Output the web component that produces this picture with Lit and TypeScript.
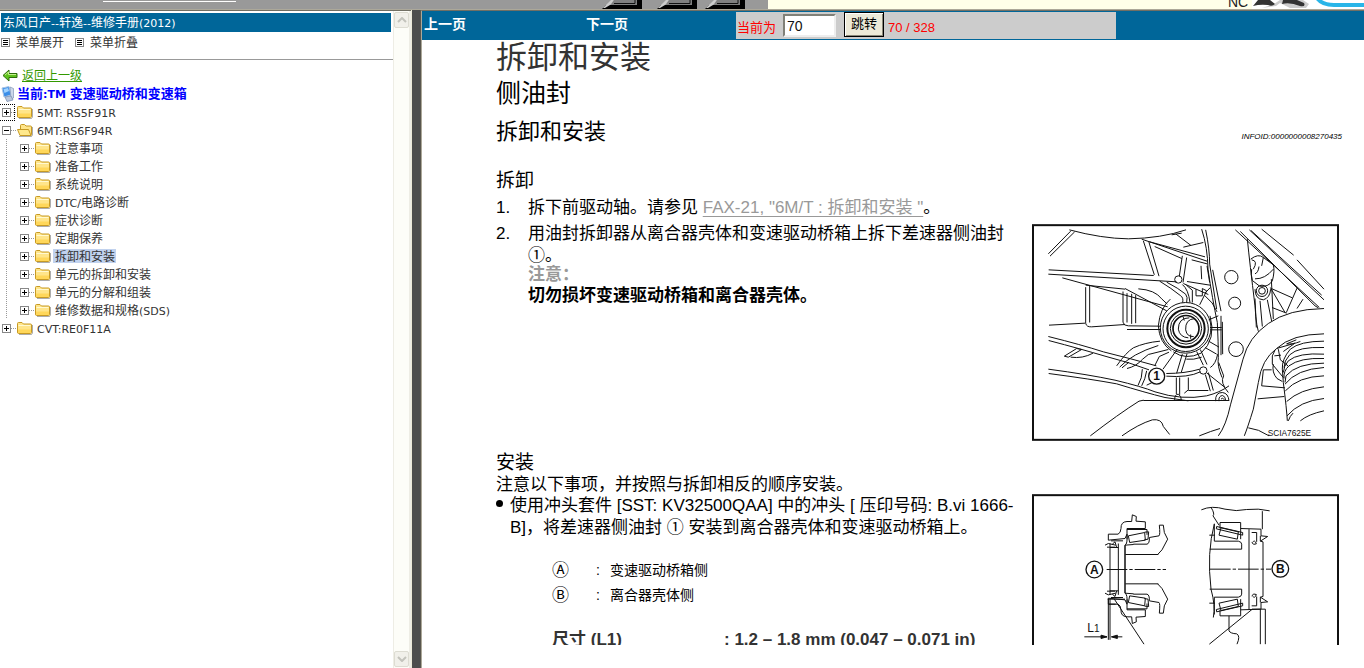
import { LitElement, html, svg, css, nothing } from "lit";
import { customElement, property, state } from "lit/decorators.js";
import { classMap } from "lit/directives/class-map.js";

interface TreeNode {
  label: string;
  note?: string;
  latin?: boolean;
  open?: boolean;
  focused?: boolean;
  selected?: boolean;
  children?: TreeNode[];
}

const TREE: TreeNode[] = [
  { label: "5MT: RS5F91R", latin: true, focused: true },
  {
    label: "6MT:RS6F94R",
    latin: true,
    open: true,
    children: [
      { label: "注意事项" },
      { label: "准备工作" },
      { label: "系统说明" },
      { label: "DTC/", note: "电路诊断", latin: true },
      { label: "症状诊断" },
      { label: "定期保养" },
      { label: "拆卸和安装", selected: true },
      { label: "单元的拆卸和安装" },
      { label: "单元的分解和组装" },
      { label: "维修数据和规格", note: "(SDS)" },
    ],
  },
  { label: "CVT:RE0F11A", latin: true },
];

const folder = (open: boolean) => html`
  <svg class="folder" width="16" height="14" viewBox="0 0 16 14" aria-hidden="true">
    <path d="M2 13.500H14.500L15.500 12V4" fill="none" stroke="#777" opacity=".6" />
    ${open
      ? svg`<path d="M3.500 10V2.500Q3.500 1.500 4.500 1.500H7.500L9 3H13.500Q14.500 3 14.500 4V11.500Q14.500 12.500 13.500 12.500H4.500Z" fill="#ffe58a" stroke="#c79a24"/>
        <path d="M0.500 6.500H11.500L14 12.500H3Z" fill="#ffe98c" stroke="#c79a24"/>`
      : svg`<path d="M0.500 11V2.500Q0.500 1.500 1.500 1.500H5L6.500 3H13.500Q14.500 3 14.500 4V11.500Q14.500 12.500 13.500 12.500H1.500Q0.500 12.500 0.500 11Z" fill="#ffe58a" stroke="#c79a24"/>
        <path d="M1.500 4.500H13.500" stroke="#fff9d0"/><path d="M1 8.500H14V12H1Z" fill="#ffd75a"/>`}
  </svg>`;

@customElement("page-banner")
class PageBanner extends LitElement {
  static styles = css`
    :host { display: flex; height: 9px; flex: none; overflow: hidden; background: #ffffe9; }
    .tools { width: 768px; height: 9px; background: #999; flex: none; }
    .name {
      margin-left: auto; width: 24px; margin-top: -5px;
      font: 14px/14px "Liberation Sans", sans-serif; color: #222;
    }
    .art { width: 112px; height: 9px; flex: none; }
  `;
  render() {
    return html`
      <svg class="tools" viewBox="0 0 768 9" aria-hidden="true">
        <path d="M103 1.500H236" stroke="#fff" />
        ${[602, 657, 705].map(
          (x) => svg`<g transform="translate(${x} 0)">
            <path d="M0 9L4 5H35V0H40V9Z" fill="#000"/>
            <path d="M1 8L9 0H12L8 5L3 8Z" fill="#ccc"/>
            <path d="M9 5L12 0H35V5Z" fill="#808080"/>
            <path d="M12 3.500H33V0" stroke="#111" fill="none"/>
          </g>`
        )}
      </svg>
      <span class="name">NC</span>
      <svg class="art" viewBox="1252 0 112 9" aria-hidden="true">
        <rect x="1252" width="112" height="9" fill="#fff" />
        <path d="M1262 8L1276 6L1280 3L1290 8H1306L1309 4L1303 0H1280L1274 4Z" fill="#ccc" />
        <path d="M1258 0H1270L1275 4Q1272 7 1268 5Q1260 4 1253 6ZM1283 0H1297L1304 3Q1306 7 1300 6Q1290 2 1282 4Z" fill="#333" />
        <path d="M1317 -2Q1322 5 1334 5H1364" fill="none" stroke="#29b5e8" stroke-width="4" />
      </svg>`;
  }
}

@customElement("manual-tree")
class ManualTree extends LitElement {
  static styles = css`
    :host {
      display: flex; flex: none; width: 411px; overflow: hidden; background: #fff;
      color: #333; font: 12px/18px "Noto Sans CJK SC", sans-serif;
    }
    .pane { flex: 1; min-width: 0; }
    .title { margin: 2px 2px 0 1px; padding-left: 2px; background: #069; color: #fff; height: 19px; }
    .latin { font: 11px/18px "DejaVu Sans", Verdana, sans-serif; }
    .tools { display: flex; gap: 9px; height: 27px; align-items: flex-start; border-bottom: 1px solid #999; }
    .tool {
      display: flex; align-items: center; gap: 6px; padding: 0 1px; border: 0;
      background: none; font: inherit; color: inherit; height: 20px;
    }
    .line { display: flex; align-items: center; gap: 4px; height: 18px; padding-left: 2px; }
    .back { margin-top: 6px; }
    .back a { color: #390; }
    .current { height: 19px; gap: 2px; padding-left: 1px; }
    .current a { color: #00f; font-weight: bold; text-decoration: none; font-size: 13px; }
    ul { list-style: none; margin: 0; padding: 0; }
    ul ul {
      padding-left: 18px;
      background: repeating-linear-gradient(#999 0 1px, transparent 1px 2px) 6px 0 / 1px 100% no-repeat;
    }
    .row { display: flex; align-items: center; height: 18px; padding-left: 2px; }
    .toggle { border: 0; padding: 0; background: none; width: 9px; height: 9px; display: block; }
    .toggle svg { display: block; }
    .focused { outline: 1px dotted #000; outline-offset: 3px; }
    .dots { width: 6px; height: 1px; background: repeating-linear-gradient(90deg, #999 0 1px, transparent 1px 2px); }
    .label { color: inherit; text-decoration: none; margin-left: 2px; padding: 0 1px 0 2px; height: 14px; line-height: 14px; white-space: nowrap; }
    .label .latin { line-height: 14px; }
    .selected { background: #c1d2ee; }
    .scroll {
      flex: none; width: 15px; display: flex; flex-direction: column; justify-content: space-between;
      background: #fdfdf8; border-left: 1px solid #eeede5; border-right: 2px solid #eeede5; padding: 1px 0;
    }
    .arrow { width: 15px; height: 16px; padding: 0; border: 1px solid #dddcd2; border-radius: 2px; background: #f1f0ea; display: grid; place-items: center; }
  `;

  @state() private closed = new Set<TreeNode>();

  private toggle(node: TreeNode) {
    const next = new Set(this.closed);
    next.has(node) ? next.delete(node) : next.add(node);
    this.closed = next;
  }

  private node(n: TreeNode): unknown {
    const open = !!n.open && !this.closed.has(n);
    const note = n.note ? html`<span class=${classMap({ latin: !n.latin })}>${n.note}</span>` : nothing;
    return html`<li>
      <div class="row">
        <button class=${classMap({ toggle: true, focused: !!n.focused })} aria-label=${open ? "收起" : "展开"} @click=${() => this.toggle(n)}>
          <svg width="9" height="9" viewBox="0 0 9 9">
            <rect x=".5" y=".5" width="8" height="8" fill="#fff" stroke="#888" />
            <path d=${open ? "M2 4.5H7" : "M2 4.5H7M4.5 2V7"} stroke="#000" />
          </svg>
        </button>
        <span class="dots"></span>
        ${folder(open)}
        <a href="#" class=${classMap({ label: true, selected: !!n.selected })}
          ><span class=${classMap({ latin: !!n.latin })}>${n.label}</span>${note}</a>
      </div>
      ${open && n.children ? html`<ul>${n.children.map((c) => this.node(c))}</ul>` : nothing}
    </li>`;
  }

  render() {
    const menuIcon = html`<svg width="9" height="9" viewBox="0 0 9 9" aria-hidden="true">
      <rect x=".5" y=".5" width="8" height="8" fill="#fff" stroke="#888" />
      <path d="M2 2.500H7M2 4.500H7M2 6.500H7" stroke="#000" />
    </svg>`;
    return html`
      <div class="pane">
        <div class="title">东风日产<span class="latin">--</span>轩逸<span class="latin">--</span>维修手册<span class="latin">(2012)</span></div>
        <div class="tools">
          <button class="tool">${menuIcon}菜单展开</button>
          <button class="tool">${menuIcon}菜单折叠</button>
        </div>
        <div class="line back">
          <svg width="16" height="13" viewBox="0 0 16 13" aria-hidden="true">
            <path d="M1 6.500L7 1V4.500H15V8.500H7V12Z" fill="#5fc21e" stroke="#2d6b0c" />
            <path d="M3 6L6.500 3V5.500H14" fill="none" stroke="#c4f08c" />
          </svg>
          <a href="#">返回上一级</a>
        </div>
        <div class="line current">
          <svg width="14" height="16" viewBox="0 0 14 16" aria-hidden="true">
            <path d="M1 2L8 0.500L10 9L3 11Z" fill="#3b8ee8" stroke="#a9c4e4" />
            <path d="M2.500 3L7 2L8 5L3.500 7Z" fill="#9fd2ff" />
            <path d="M9 1L12.500 2.500V12L10 13Z" fill="#cdd8ea" stroke="#8296b8" stroke-width=".7" />
            <path d="M4 11L10 10L12 14L6 15.500Z" fill="#bcc8dc" stroke="#7488aa" stroke-width=".7" />
          </svg>
          <a href="#">当前<span class="latin"><b>:TM </b></span>变速驱动桥和变速箱</a>
        </div>
        <ul>${TREE.map((n) => this.node(n))}</ul>
      </div>
      <div class="scroll">
        ${["M1 5L5 1L9 5", "M1 1L5 5L9 1"].map(
          (d, i) => html`<button class="arrow" aria-label=${i ? "向下" : "向上"}>
            <svg width="10" height="6" viewBox="0 0 10 6"><path d=${d} fill="none" stroke="#c3c3bc" stroke-width="2" /></svg>
          </button>`
        )}
      </div>`;
  }
}

@customElement("page-nav")
class PageNav extends LitElement {
  static styles = css`
    :host {
      display: grid; grid-template-columns: 164fr 150fr 380fr 248fr; flex: none; height: 29px;
      background: #069; align-items: center; font-family: "Liberation Sans", "Noto Sans CJK SC", sans-serif;
    }
    .go { color: #fff; font-weight: bold; font-size: 14px; line-height: 20px; text-decoration: none; padding: 0 0 3px 2px; }
    .next { padding-left: 0; }
    form { display: flex; height: 27px; background: #ccc; color: #f00; font-size: 13px; line-height: 16px; padding-left: 1px; }
    label, output { margin-top: 8px; }
    input {
      width: 53px; height: 23px; margin: 2px 0 0 7px; padding: 0 2px; box-sizing: border-box; background: #fff;
      border: 2px solid; border-color: #808078 #eee #eee #808078; font: 14px "Liberation Sans", sans-serif; color: #111;
    }
    button {
      width: 40px; height: 25px; margin: 0 4px 0 8px; padding: 0 0 4px; background: #ece9d8; color: #000;
      border: 1px solid #000; box-shadow: inset 1px 1px #fff, inset -1px -1px #8a887a; font: 13px "Noto Sans CJK SC", sans-serif;
    }
  `;
  @property({ type: Number }) page = 70;
  @property({ type: Number }) total = 328;
  render() {
    return html`
      <a class="go" href="#">上一页</a>
      <a class="go next" href="#">下一页</a>
      <form @submit=${(e: Event) => e.preventDefault()}>
        <label for="page">当前为</label>
        <input id="page" type="text" .value=${String(this.page)} />
        <button>跳转</button>
        <output>${this.page} / ${this.total}</output>
      </form>`;
  }
}

const housingFigure = html`
  <svg class="figure" viewBox="21 15 921 650" role="img" aria-label="差速器侧油封">
    <rect x="24" y="18" width="915" height="644" fill="#fff" stroke="#111" stroke-width="6" />
    <g fill="none" stroke="#111" stroke-width="3">
      <path d="M70 104L137 36M75 111L149 38M133 32Q230 58 310 59Q410 57 483 32M71 152L386 169M70 165L455 188M355 65L388 167M371 66L402 171M350 60L546 126M374 68L540 113M389 82L470 118M452 44L498 79M440 47L470 42M475 84L535 70M472 110L463 171M485 115L474 190M500 122L546 134" />
      <circle cx="460" cy="181" r="11" />
      <path d="M112 176L428 263M300 208L425 275M182 204V312Q184 324 200 323L300 316M194 198V310M182 198L300 210M294 217V309Q296 320 310 320L405 321M306 222V310M320 224V314M332 228V312M306 331H405M72 318L180 312" />
      <path d="M404 186Q440 208 466 229Q476 235 473 250M425 189Q460 207 482 225Q489 234 485 249M472 196Q490 210 495 250M484 198L502 213V250M475 193L550 226M486 187L555 198M340 209Q390 212 410 239L427 255M513 210V230L532 230V208L545 215L524 257M538 228Q566 250 576 278M556 205L540 222" />
      <path d="M436 240Q405 266 400 320Q403 370 439 395M445 398Q482 424 528 402Q575 360 555 290M551 302L580 290M555 325H590M555 332H590M551 366L582 384M540 385L575 405" />
      <circle cx="482" cy="326" r="76" />
      <circle cx="482" cy="329" r="68" />
      <circle cx="483" cy="328" r="56" stroke-width="6" />
      <circle cx="483" cy="328" r="47" />
      <circle cx="483" cy="328" r="39" stroke-width="5" />
      <path d="M510 298Q480 300 482 332Q486 354 506 352M493 296Q460 296 460 330Q464 354 490 356M474 292L478 304M497 346V359" />
      <path d="M70 352Q170 377 235 398Q320 419 394 440M71 364Q170 390 240 411Q315 430 372 452M70 450Q190 466 270 483Q350 502 390 518Q470 544 545 530Q585 520 612 500M71 463Q200 480 275 494Q360 520 420 535L490 545" />
      <path d="M118 411L155 388L170 391L130 414ZM137 414Q173 419 204 402M275 440Q303 400 325 386Q360 370 405 366M284 444Q320 404 400 379M291 446L312 429M306 448Q333 442 353 420L370 406L430 391M389 440L403 412L432 399M352 450Q352 477 339 499M365 455Q361 480 350 500M365 498L394 484" />
      <path d="M457 390L414 450M472 405L455 462M486 404L469 459M515 397L535 438M526 391L546 436M424 463Q480 463 524 450M424 471Q490 476 526 458M454 475V525M464 475V527M490 475V512L478 522M490 514L550 514M541 466L556 516M550 460L565 514M546 462L600 505M556 445Q572 435 578 405M530 414Q505 423 484 420" />
      <circle cx="535" cy="454" r="11" />
      <path d="M449 545Q448 525 460 525Q470 530 469 545M355 544H612M196 650Q280 585 342 546L356 543M291 650Q340 615 382 602Q410 598 415 622L434 646" />
      <path d="M572 546Q570 520 592 520Q610 522 612 545M582 546Q580 530 593 529Q602 532 602 545M588 540Q592 532 598 542" />
      <path d="M530 30Q548 85 549 150Q562 240 577 310Q580 370 580 415Q576 440 591 475M542 32Q554 90 554 135L575 270M563 152L588 276M588 290V408M592 308L593 405M581 430L596 470Q584 490 610 520M528 140L530 180M546 140L554 190" />
      <path d="M667 60Q674 130 690 260Q694 330 704 345" />
      <circle cx="619" cy="174" r="20" /><circle cx="629" cy="252" r="18" /><circle cx="633" cy="390" r="22" />
      <path d="M677 120Q700 102 715 115L745 137Q750 155 742 185Q730 205 704 201L682 184Q677 165 680 150M680 122Q700 125 685 150M702 142Q700 160 690 164M715 115L710 140M745 150Q720 180 690 179" />
      <circle cx="711" cy="215" r="10" /><circle cx="711" cy="215" r="17" />
      <path d="M690 210Q690 240 715 242Q735 236 737 210M690 238L694 325M705 245L712 322M727 242L740 306M736 205L780 280M739 208L802 236M741 265L785 282M739 180L745 300" />
      <path d="M631 32L883 265M646 37L870 260M673 32L897 242M710 30L806 108M816 122L897 210M678 34L890 228M816 207L784 280M834 240L816 268M870 260L880 266" />
      <path d="M897 268Q790 270 730 313Q670 355 654 420L617 555Q603 620 580 650L658 650Q668 625 685 570L700 490Q710 420 755 388Q800 345 897 344Z" fill="#fff" stroke="none" />
      <path d="M897 268Q790 270 730 313Q670 355 654 420L617 555Q603 620 580 650M897 344Q800 345 755 388Q710 420 700 490L685 570Q668 625 658 650M523 650Q560 635 585 628M670 626Q700 629 732 650" />
      <path d="M755 388L810 372L775 397M750 393L742 410V435L775 475M760 390L766 422L789 440M748 410L768 408M740 452H715L710 500L780 506M698 539L778 532M745 435Q740 460 756 478L772 487M814 362L785 374Q800 377 826 367" />
      <path d="M897 366Q825 366 796 390Q770 420 772 450L775 490Q785 570 787 605M897 385Q820 382 794 407Q777 425 777 445M897 405Q820 400 790 425Q776 440 775 460M897 418Q825 415 792 440Q775 455 777 478M897 432Q815 432 783 470L780 490M897 445Q815 450 780 495M897 470Q820 472 781 515M897 503Q825 510 785 547M897 538Q825 545 786 590M897 575Q850 585 826 605M790 605Q795 590 804 582" />
      <circle cx="395" cy="471" r="24" fill="#fff" stroke-width="4" />
    </g>
    <text class="num" x="395" y="484" font-size="36">1</text>
    <text class="code" x="728" y="650" font-size="25">SCIA7625E</text>
  </svg>`;

const halfBearing = svg`
  <path d="M250 153V135H279Q287 132 288 118Q287 98 306 97H320L322 77L334 82L333 96L361 98V118H306V150"/>
  <path d="M306 121H366V137M310 140L359 130L361 153L314 160ZM300 168Q308 165 306 135M325 165H366Q374 163 373 145L402 140Q406 137 403 108H415L418 130L428 150L411 182L398 196M359 129L371 128L369 150L358 152M250 153L300 148L306 135"/>
  <path d="M301 196H400M255 163V240M280 163V240M255 175H280M240 168L250 163L272 168M246 174H270M262 165L270 158L275 175M258 155H294M300 240V168L326 166"/>`;

const halfSeat = svg`
  <path d="M585 118V100H647V150M575 112L653 130V138L574 119ZM588 116L640 128L637 150L582 138ZM568 104V156H640Q650 158 650 165V180H554M553 138H570M647 118L708 120V140L728 142L706 156M672 120V240M680 130H695V158M682 160Q690 150 694 164Q686 169 680 160M706 140V156L714 158V240"/>`;

const sealFigure = html`
  <svg class="figure" viewBox="21 15 921 650" role="img" aria-label="油封安装位置">
    <rect x="24" y="18" width="915" height="644" fill="#fff" stroke="#111" stroke-width="6" />
    <g fill="none" stroke="#111" stroke-width="3">
      ${halfBearing}
      <g transform="matrix(1 0 0 -1 0 480)">${halfBearing}</g>
      <path d="M300 168V312M248 330H300" />
      <path d="M245 241H423M555 240H738" stroke-dasharray="62 6 10 6" />
      <path d="M250 330V452M255 330V452M268 330L357 465M250 345H272M178 443H246M262 443H292" />
      <path d="M228 438L246 443L228 448ZM277 438L259 443L277 448Z" fill="#111" />
      ${halfSeat}
      <g transform="matrix(1 0 0 -1 0 480)">${halfSeat}</g>
      <path d="M529 62Q560 48 600 60Q635 68 665 61Q700 57 734 65M559 56Q570 75 564 80L582 108M712 66V120M568 104Q545 190 558 300Q572 350 565 385M612 380V425Q616 433 635 434Q647 440 636 465M553 465L682 360H721V465M706 360V465" />
      <circle cx="208" cy="241" r="25" stroke-width="4" />
      <circle cx="766" cy="239" r="25" stroke-width="4" />
    </g>
    <text class="num" x="208" y="254" font-size="36">A</text>
    <text class="num" x="766" y="252" font-size="36">B</text>
    <text class="code" x="187" y="429" font-size="36">L<tspan font-size="30">1</tspan></text>
  </svg>`;

@customElement("manual-page")
class ManualPage extends LitElement {
  static styles = css`
    :host {
      display: block; flex: 1; min-height: 0; overflow: hidden; margin-bottom: 23px; padding: 0 25px 0 74px;
      background: #fff; color: #000; font: 17px/22px "Liberation Sans", "Noto Sans CJK SC", sans-serif;
    }
    h1, h2, h3, h4, p, ol, ul { margin: 0; padding: 0; font-weight: normal; }
    h1 { font-size: 31px; line-height: 36px; color: #333; }
    h2 { font-size: 25px; line-height: 34px; }
    h3 { font-size: 22px; line-height: 44px; }
    h4 { font-size: 19px; line-height: 24px; }
    .head { display: flex; justify-content: space-between; margin-right: -3px; }
    .info { font-size: 8px; font-style: italic; line-height: 18px; padding-top: 18px; }
    .part { display: grid; grid-template-columns: minmax(0, 1fr) 307px; column-gap: 10px; }
    .remove { margin-top: 15px; min-height: 282px; }
    .figure { display: block; width: 307px; height: 217px; }
    .remove .figure { margin-top: 55px; }
    .install .figure { margin-top: 43px; }
    .steps { list-style: none; counter-reset: step; }
    .steps li { display: grid; grid-template-columns: 32px 1fr; counter-increment: step; margin-top: 4px; }
    .steps li::before { content: counter(step) "."; }
    .steps a { color: #999; text-underline-offset: 3px; }
    .caution { color: #999; font-weight: bold; line-height: 16px; }
    .warn { font-weight: bold; line-height: 26px; }
    .note { line-height: 20px; }
    .bullets { list-style: none; }
    .bullets li { display: grid; grid-template-columns: 14px 1fr; line-height: 22px; }
    .bullets li::before { content: ""; width: 7px; height: 7px; margin-top: 5px; border-radius: 50%; background: #000; }
    .keys { margin: 19px 0 0 56px; display: grid; grid-template-columns: 44px 14px 1fr; font-size: 14px; line-height: 25px; }
    .key { font-size: 17px; }
    .size { display: grid; grid-template-columns: 172px 1fr; margin: 21px 0 0 56px; font-weight: bold; color: #333; }
    text { font-family: "Liberation Sans", sans-serif; fill: #111; }
    .num { text-anchor: middle; font-weight: bold; }
  `;
  render() {
    return html`
      <h1>拆卸和安装</h1>
      <h2>侧油封</h2>
      <div class="head"><h3>拆卸和安装</h3><span class="info">INFOID:0000000008270435</span></div>
      <section class="part remove">
        <div>
          <h4>拆卸</h4>
          <ol class="steps">
            <li><p>拆下前驱动轴。请参见 <a href="#">FAX-21, "6M/T : 拆卸和安装 "</a>。</p></li>
            <li>
              <div>
                <p>用油封拆卸器从离合器壳体和变速驱动桥箱上拆下差速器侧油封<br />①。</p>
                <p class="caution">注意：</p>
                <p class="warn">切勿损坏变速驱动桥箱和离合器壳体。</p>
              </div>
            </li>
          </ol>
        </div>
        ${housingFigure}
      </section>
      <section class="part install">
        <div>
          <h4>安装</h4>
          <p class="note">注意以下事项，并按照与拆卸相反的顺序安装。</p>
          <ul class="bullets">
            <li><p>使用冲头套件 [SST: KV32500QAA] 中的冲头 [ 压印号码: B.vi 1666-<br />B]，将差速器侧油封 ① 安装到离合器壳体和变速驱动桥箱上。</p></li>
          </ul>
          <div class="keys">
            <span class="key">Ⓐ</span><span>:</span><span>变速驱动桥箱侧</span>
            <span class="key">Ⓑ</span><span>:</span><span>离合器壳体侧</span>
          </div>
          <div class="size"><span>尺寸 (L1)</span><span>: 1.2 – 1.8 mm (0.047 – 0.071 in)</span></div>
        </div>
        ${sealFigure}
      </section>`;
  }
}

@customElement("app-root")
class AppRoot extends LitElement {
  static styles = css`
    :host { display: flex; flex-direction: column; height: 100vh; overflow: hidden; background: #fff; }
    .frames { flex: 1; min-height: 0; display: flex; border-top: 1px solid #aca899; }
    .side { display: flex; border-top: 1px solid #716f64; }
    .splitter { flex: none; width: 8px; background: #4d4d4d; border-left: 1px solid #ece9d8; }
    .main {
      flex: 1; min-width: 0; display: flex; flex-direction: column;
      border-top: 1px solid #716f64; border-left: 2px groove #aca899;
    }
  `;
  render() {
    return html`
      <page-banner></page-banner>
      <div class="frames">
        <nav class="side"><manual-tree></manual-tree></nav>
        <div class="splitter"></div>
        <main class="main">
          <page-nav></page-nav>
          <manual-page></manual-page>
        </main>
      </div>`;
  }
}
